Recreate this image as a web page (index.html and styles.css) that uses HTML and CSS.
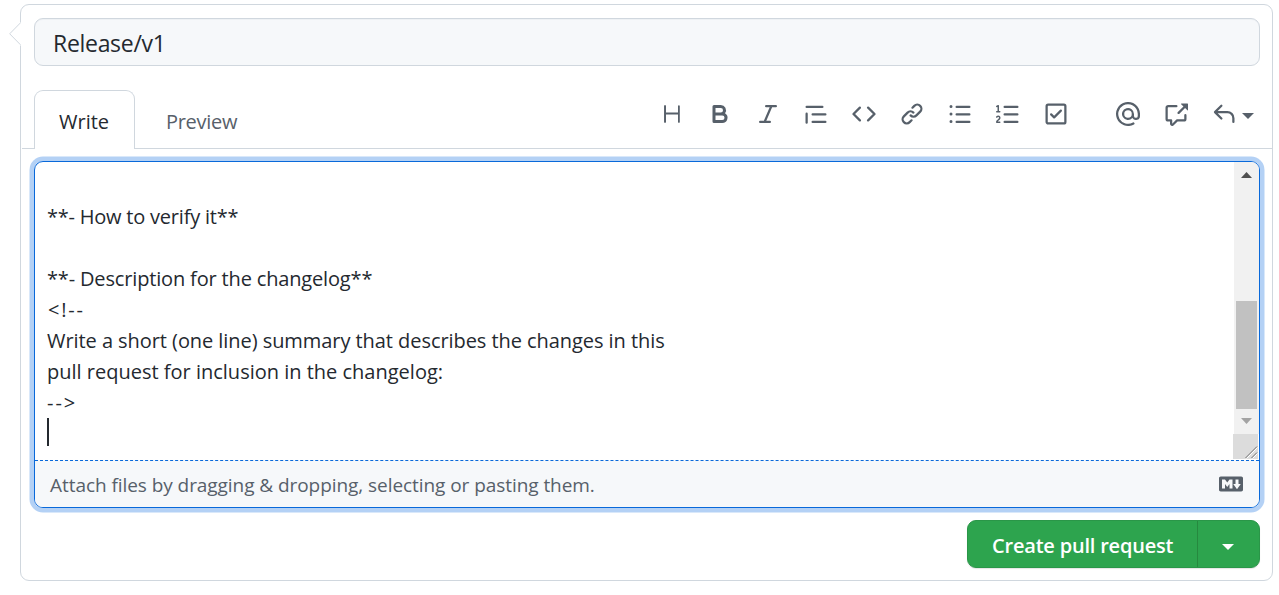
FILE: index.html
```html
<!DOCTYPE html>
<html lang="en">
<head>
<meta charset="utf-8">
<title>Open a pull request</title>
<link rel="stylesheet" href="styles.css">
</head>
<body>
<main class="composer">
  <svg class="pointer" width="12" height="24" viewBox="0 0 12 24"><path d="M12 0v24L1 12z" fill="#fff"/><path d="M11.5 .8.7 11.8l10.8 11" fill="none" stroke="#d0d7de"/></svg>
  <div class="title-field"><span class="title-text">Release/v1</span></div>
  <div class="tab-row">
    <nav class="tabs">
      <div class="tab tab-active"><span>Write</span></div>
      <div class="tab"><span class="t-preview">Preview</span></div>
    </nav>
    <div class="toolbar">
      <svg class="icon" viewBox="0 0 16 16"><path d="M3.25 2a.75.75 0 01.75.75V7h8V2.75a.6.6 0 011.2 0v10.5a.6.6 0 01-1.2 0V8.3H4v4.95a.65.65 0 01-1.3 0V2.75A.7.7 0 013.25 2z"/></svg>
      <svg class="icon" viewBox="0 0 16 16"><path fill-rule="evenodd" d="M4 2a1 1 0 00-1 1v10a1 1 0 001 1h5.5a3.5 3.5 0 001.852-6.47A3.5 3.5 0 008.5 2H4zm4.5 5a1.5 1.5 0 100-3H5v3h3.5zM5 9v3h4.5a1.5 1.5 0 000-3H5z"/></svg>
      <svg class="icon" viewBox="0 0 16 16"><path d="M6 2.75A.75.75 0 016.75 2h6.5a.75.75 0 010 1.5h-2.505l-3.858 9H9.25a.75.75 0 010 1.5h-6.5a.75.75 0 010-1.5h2.505l3.858-9H6.75A.75.75 0 016 2.75z"/></svg>
      <svg class="icon" viewBox="0 0 16 16"><path d="M1.75 2.5a.75.75 0 000 1.5h10.5a.75.75 0 000-1.5H1.75zm4 5a.75.75 0 000 1.5h8.5a.75.75 0 000-1.5h-8.5zm0 5a.75.75 0 000 1.5h8.5a.75.75 0 000-1.5h-8.5zM2.5 7.75a.75.75 0 00-1.5 0v6a.75.75 0 001.5 0v-6z"/></svg>
      <svg class="icon" viewBox="0 0 16 16"><path d="M4.72 3.22a.75.75 0 011.06 1.06L2.06 8l3.72 3.72a.75.75 0 11-1.06 1.06L.47 8.53a.75.75 0 010-1.06l4.25-4.25zm6.56 0a.75.75 0 10-1.06 1.06L13.94 8l-3.72 3.72a.75.75 0 101.06 1.06l4.25-4.25a.75.75 0 000-1.06l-4.25-4.25z"/></svg>
      <svg class="icon" viewBox="0 0 16 16"><path d="M7.775 3.275a.75.75 0 001.06 1.06l1.25-1.25a2 2 0 112.83 2.83l-2.5 2.5a2 2 0 01-2.83 0 .75.75 0 00-1.06 1.06 3.5 3.5 0 004.95 0l2.5-2.5a3.5 3.5 0 00-4.95-4.95l-1.25 1.25zm-4.69 9.64a2 2 0 010-2.83l2.5-2.5a2 2 0 012.83 0 .75.75 0 001.06-1.06 3.5 3.5 0 00-4.95 0l-2.5 2.5a3.5 3.5 0 004.95 4.95l1.25-1.25a.75.75 0 00-1.06-1.06l-1.25 1.25a2 2 0 01-2.83 0z"/></svg>
      <svg class="icon" viewBox="0 0 16 16"><path d="M2 4a1 1 0 100-2 1 1 0 000 2zm3.75-1.5a.75.75 0 000 1.5h8.5a.75.75 0 000-1.5h-8.5zm0 5a.75.75 0 000 1.5h8.5a.75.75 0 000-1.5h-8.5zm0 5a.75.75 0 000 1.5h8.5a.75.75 0 000-1.5h-8.5zM3 8a1 1 0 11-2 0 1 1 0 012 0zm-1 6a1 1 0 100-2 1 1 0 000 2z"/></svg>
      <svg class="icon" viewBox="0 0 16 16"><path d="M2.003 2.5a.5.5 0 00-.723-.447l-1.003.5a.5.5 0 00.446.895l.28-.14V6H.5a.5.5 0 000 1h2.006a.5.5 0 100-1h-.503V2.5zM5 3.25a.75.75 0 01.75-.75h8.5a.75.75 0 010 1.5h-8.5A.75.75 0 015 3.25zm0 5a.75.75 0 01.75-.75h8.5a.75.75 0 010 1.5h-8.5A.75.75 0 015 8.25zm0 5a.75.75 0 01.75-.75h8.5a.75.75 0 010 1.5h-8.5a.75.75 0 01-.75-.75zM.924 10.32l.003-.004a.851.851 0 01.144-.153A.66.66 0 011.5 10c.195 0 .306.068.374.146a.57.57 0 01.128.376c0 .453-.269.682-.8 1.078l-.035.025C.692 11.98 0 12.495 0 13.5a.5.5 0 00.5.5h2.003a.5.5 0 000-1H1.146c.132-.197.351-.372.654-.597l.047-.035c.47-.35 1.156-.858 1.156-1.845 0-.365-.118-.744-.377-1.038-.268-.303-.658-.484-1.126-.484-.48 0-.84.202-1.068.392a1.858 1.858 0 00-.356.4.5.5 0 00.851.525z"/></svg>
      <svg class="icon" viewBox="0 0 16 16"><path fill-rule="evenodd" d="M2.5 2.75a.25.25 0 01.25-.25h10.5a.25.25 0 01.25.25v10.5a.25.25 0 01-.25.25H2.75a.25.25 0 01-.25-.25V2.75zM2.75 1A1.75 1.75 0 001 2.75v10.5c0 .966.784 1.75 1.75 1.75h10.5A1.75 1.75 0 0015 13.25V2.75A1.75 1.75 0 0013.25 1H2.75zm9.03 5.28a.75.75 0 00-1.06-1.06L6.75 9.19 5.28 7.72a.75.75 0 00-1.06 1.06l2 2a.75.75 0 001.06 0l4.5-4.5z"/></svg>
      <svg class="icon icon-group" viewBox="0 0 16 16"><path fill-rule="evenodd" d="M4.75 2.37a6.5 6.5 0 006.5 11.26.75.75 0 01.75 1.298 8 8 0 113.994-7.273.754.754 0 01.006.095v1.5a2.75 2.75 0 01-5.072 1.475A4 4 0 1112 8v1.25a1.25 1.25 0 002.5 0V7.867a6.5 6.5 0 00-9.75-5.496V2.37zM10.5 8a2.5 2.5 0 10-5 0 2.5 2.5 0 005 0z"/></svg>
      <svg class="icon" viewBox="0 0 16 16"><path d="M16 1.25v4.146a.25.25 0 01-.427.177L14.03 4.03l-3.75 3.75a.75.75 0 11-1.06-1.06l3.75-3.75-1.543-1.543A.25.25 0 0111.604 1h4.146a.25.25 0 01.25.25zM2.75 3.5a.25.25 0 00-.25.25v7.5c0 .138.112.25.25.25h2a.75.75 0 01.75.75v2.19l2.72-2.72a.75.75 0 01.53-.22h4.5a.25.25 0 00.25-.25v-2.5a.75.75 0 111.5 0v2.5A1.75 1.75 0 0113.25 13H9.06l-2.573 2.573A1.457 1.457 0 014 14.543V13H2.75A1.75 1.75 0 011 11.25v-7.5C1 2.784 1.784 2 2.75 2h5.5a.75.75 0 010 1.5h-5.5z"/></svg>
      <div class="reply">
        <svg class="icon" viewBox="0 0 16 16"><path d="M6.78 1.97a.75.75 0 010 1.06L3.81 6h6.44A4.75 4.75 0 0115 10.75v2.5a.75.75 0 01-1.5 0v-2.5a3.25 3.25 0 00-3.25-3.25H3.81l2.97 2.97a.75.75 0 11-1.06 1.06L1.47 7.28a.75.75 0 010-1.06l4.25-4.25a.75.75 0 011.06 0z"/></svg>
        <span class="caret"></span>
      </div>
    </div>
  </div>
  <section class="editor">
    <div class="editor-body">
      <div class="text">
        <div class="line"><span class="l-verify">**- How to verify it**</span></div>
        <div class="line"></div>
        <div class="line"><span class="l-desc">**- Description for the changelog**</span></div>
        <div class="line l-open"><span>&lt;!--</span></div>
        <div class="line"><span class="l-summary">Write a short (one line) summary that describes the changes in this</span></div>
        <div class="line"><span>pull request for inclusion in the changelog:</span></div>
        <div class="line"><span class="l-close">--&gt;</span></div>
        <div class="line"><span class="cursor"></span></div>
      </div>
      <div class="side">
        <div class="scrollbar">
          <svg width="11" height="6" viewBox="0 0 11 6"><path d="M5.5 0 11 6H0z" fill="#505050"/></svg>
          <div class="thumb"></div>
          <svg width="11" height="6" viewBox="0 0 11 6"><path d="M0 0h11L5.5 6z" fill="#a3a3a3"/></svg>
        </div>
        <svg class="resizer" width="25" height="25" viewBox="0 0 25 25"><rect width="25" height="25" fill="#dcdcdc"/><path d="M13.500 24.500 24.500 13.500M19.500 24.500l5-5" stroke="#fff"/><path d="M12.500 24 24 12.500M18.500 24l5.500-5.500" stroke="#505050" stroke-width=".8"/></svg>
      </div>
    </div>
    <div class="attach">
      <span class="attach-text">Attach files by dragging &amp; dropping, selecting or pasting them.</span>
      <svg class="icon" viewBox="0 0 16 16"><path fill-rule="evenodd" d="M14.85 3H1.15C.52 3 0 3.52 0 4.15v7.69C0 12.48.52 13 1.15 13h13.69c.64 0 1.15-.52 1.15-1.15v-7.7C16 3.52 15.48 3 14.85 3zM9 11H7V8L5.5 9.92 4 8v3H2V5h2l1.5 2L7 5h2v6zm2.990.5L9.5 8H11V5h2v3h1.5l-2.510 3.500z"/></svg>
    </div>
  </section>
  <div class="actions">
    <div class="button-group">
      <div class="button-main"><span class="button-text">Create pull request</span></div>
      <div class="button-menu"><span class="caret"></span></div>
    </div>
  </div>
</main>
</body>
</html>
```

FILE: styles.css
```css
* { box-sizing: border-box; }
body {
  margin: 0;
  height: 595px;
  overflow: hidden;
  padding: 4px 6px 0 20px;
  background: #fff;
  color: #24292f;
  font-family: "Open Sans", "Noto Sans", sans-serif;
  font-size: 20px;
}
.composer {
  position: relative;
  display: flex;
  flex-direction: column;
  height: 577px;
  padding: 13px 0 0;
  border: 1px solid #d0d7de;
  border-radius: 9px;
}
.pointer { position: absolute; left: -12px; top: 17px; }
.title-field {
  display: flex;
  align-items: center;
  height: 48px;
  margin: 0 12px 0 13px;
  padding: 0 18px 0;
  border: 1px solid #d0d7de;
  border-radius: 9px;
  background: #f6f8fa;
  box-shadow: inset 0 1px 0 #eef1f4;
}
span { white-space: nowrap; }
.title-text { font-size: 23px; letter-spacing: -0.3px; line-height: 31px; padding-top: 2px; }
.tab-row {
  display: flex;
  justify-content: space-between;
  align-items: flex-start;
  height: 59px;
  margin: 24px 0 0 1px;
  padding: 0 18px 0 12px;
  background: linear-gradient(#d0d7de, #d0d7de) bottom / 100% 1px no-repeat;
}
.tabs { display: flex; }
.tab {
  height: 59px;
  padding: 15px 24px 0 30px;
  border: 1px solid transparent;
  border-bottom: 0;
  line-height: 31px;
  color: #57606a;
}
.tab-active {
  width: 101px;
  padding-left: 24px;
  border-color: #d0d7de;
  border-radius: 9px 9px 0 0;
  background: #fff;
  color: #24292f;
}
.t-preview { letter-spacing: -0.3px; }
.toolbar { display: flex; gap: 24px; padding-top: 12px; }
.icon { display: block; flex: none; width: 24px; height: 24px; fill: #57606a; }
.icon-group { margin-left: 24px; }
.reply { display: flex; align-items: center; gap: 6px; color: #57606a; }
.caret {
  width: 12px;
  height: 6px;
  border: 6px solid transparent;
  border-top-color: currentColor;
  border-bottom: 0;
}
.reply .caret { margin-top: 4px; }
.editor {
  height: 347px;
  margin: 12px 12px 0 13px;
  border: 1px solid #0969da;
  border-radius: 9px;
  box-shadow: 0 0 0 4.5px #b4d1f5;
  overflow: hidden;
}
.editor-body { display: flex; justify-content: space-between; height: 298px; }
.text { padding: 39px 0 0 12px; }
.line { height: 31px; line-height: 31px; }
.l-verify { letter-spacing: -0.22px; }
.l-desc { letter-spacing: -0.16px; }
.l-summary { letter-spacing: -0.06px; }
.l-open { padding-left: 1px; letter-spacing: 1.8px; }
.l-close { letter-spacing: 2px; }
.cursor { display: block; width: 2px; height: 28px; background: #24292f; }
.side { display: flex; flex-direction: column; align-items: flex-end; width: 26px; }
.scrollbar {
  display: flex;
  flex-direction: column;
  align-items: center;
  width: 25px;
  height: 272px;
  padding-top: 10px;
  background: #f1f1f1;
}
.thumb { width: 21px; height: 108px; margin: 123px 0 9px; background: #c1c1c1; }
.resizer { align-self: flex-start; }
.attach {
  display: flex;
  align-items: center;
  justify-content: space-between;
  height: 47px;
  padding: 0 16px 0 15px;
  border-top: 1px dashed #0969da;
  background: #f6f8fa;
  color: #57606a;
}
.attach-text { font-size: 19px; letter-spacing: -0.06px; padding-top: 1px; }
.actions { display: flex; justify-content: flex-end; padding: 12px 12px 0; }
.button-group {
  display: flex;
  width: 293px;
  height: 48px;
  border: 1px solid #2a9648;
  border-radius: 9px;
  background: #2da44e;
  color: #fff;
  font-weight: 600;
  box-shadow: 0 1px 1px rgba(27, 31, 36, .12);
}
.button-main {
  display: flex;
  align-items: center;
  width: 230px;
  padding: 2px 0 0 24px;
  border-right: 1px solid #26893f;
}
.button-text { letter-spacing: -0.2px; }
.button-menu { display: flex; flex: 1; align-items: center; justify-content: center; padding: 5px 1px 0 0; }
```
